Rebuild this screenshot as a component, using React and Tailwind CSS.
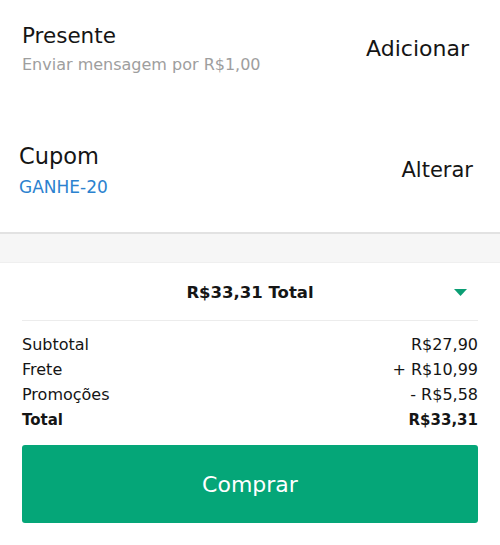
const font = { fontFamily: "'DejaVu Sans', sans-serif" };

const App = () => {
  const rows = [
    { label: "Subtotal", value: "R$27,90" },
    { label: "Frete", value: "+ R$10,99" },
    { label: "Promoções", value: "- R$5,58" },
  ];

  return (
    <div className="w-[500px] h-[545px] bg-white text-[#151515] overflow-hidden" style={font}>
      {/* Presente */}
      <div className="flex items-center justify-between pl-[22px] pr-[31px] pt-[22px]">
        <div className="flex flex-col gap-[4px]">
          <span className="text-[21.5px] leading-[28px]">Presente</span>
          <span className="text-[16px] leading-[22px] text-[#9e9e9e]">Enviar mensagem por R$1,00</span>
        </div>
        <span className="text-[22px] leading-[28px]">Adicionar</span>
      </div>

      {/* Cupom */}
      <div className="flex items-center justify-between pl-[19px] pr-[27px] pt-[66px] pb-[34px]">
        <div className="flex flex-col gap-[6px]">
          <span className="text-[22.5px] leading-[28px]">Cupom</span>
          <span className="text-[17px] leading-[22px] text-[#2b82cf]">GANHE-20</span>
        </div>
        <span className="text-[21px] leading-[28px]">Alterar</span>
      </div>

      <div className="h-[31px] bg-[#f6f6f6] border-t-2 border-b border-t-[#e2e2e2] border-b-[#efefef]"></div>

      {/* Resumo */}
      <div className="px-[22px]">
        <div className="relative flex items-center justify-center h-[58px] pt-[3px] border-b border-[#ececec]">
          <span className="text-[16.5px] font-bold">R$33,31 Total</span>
          <svg className="absolute right-[11px] top-[26px]" width="13" height="7" viewBox="0 0 13 7">
            <path d="M0 0h13L6.5 7z" fill="#0b9e74" />
          </svg>
        </div>
        <div className="pt-[11px] text-[16px] leading-[25px]">
          {rows.map((row) => (
            <div key={row.label} className="flex justify-between">
              <span>{row.label}</span>
              <span>{row.value}</span>
            </div>
          ))}
          <div className="flex justify-between font-bold text-[15px] pt-[1px]">
            <span>Total</span>
            <span>R$33,31</span>
          </div>
        </div>
        <button className="mt-[12px] w-full h-[78px] rounded-[3px] bg-[#05a678] text-white text-[22px]" style={font}>
          Comprar
        </button>
      </div>
    </div>
  );
};

export default App;
